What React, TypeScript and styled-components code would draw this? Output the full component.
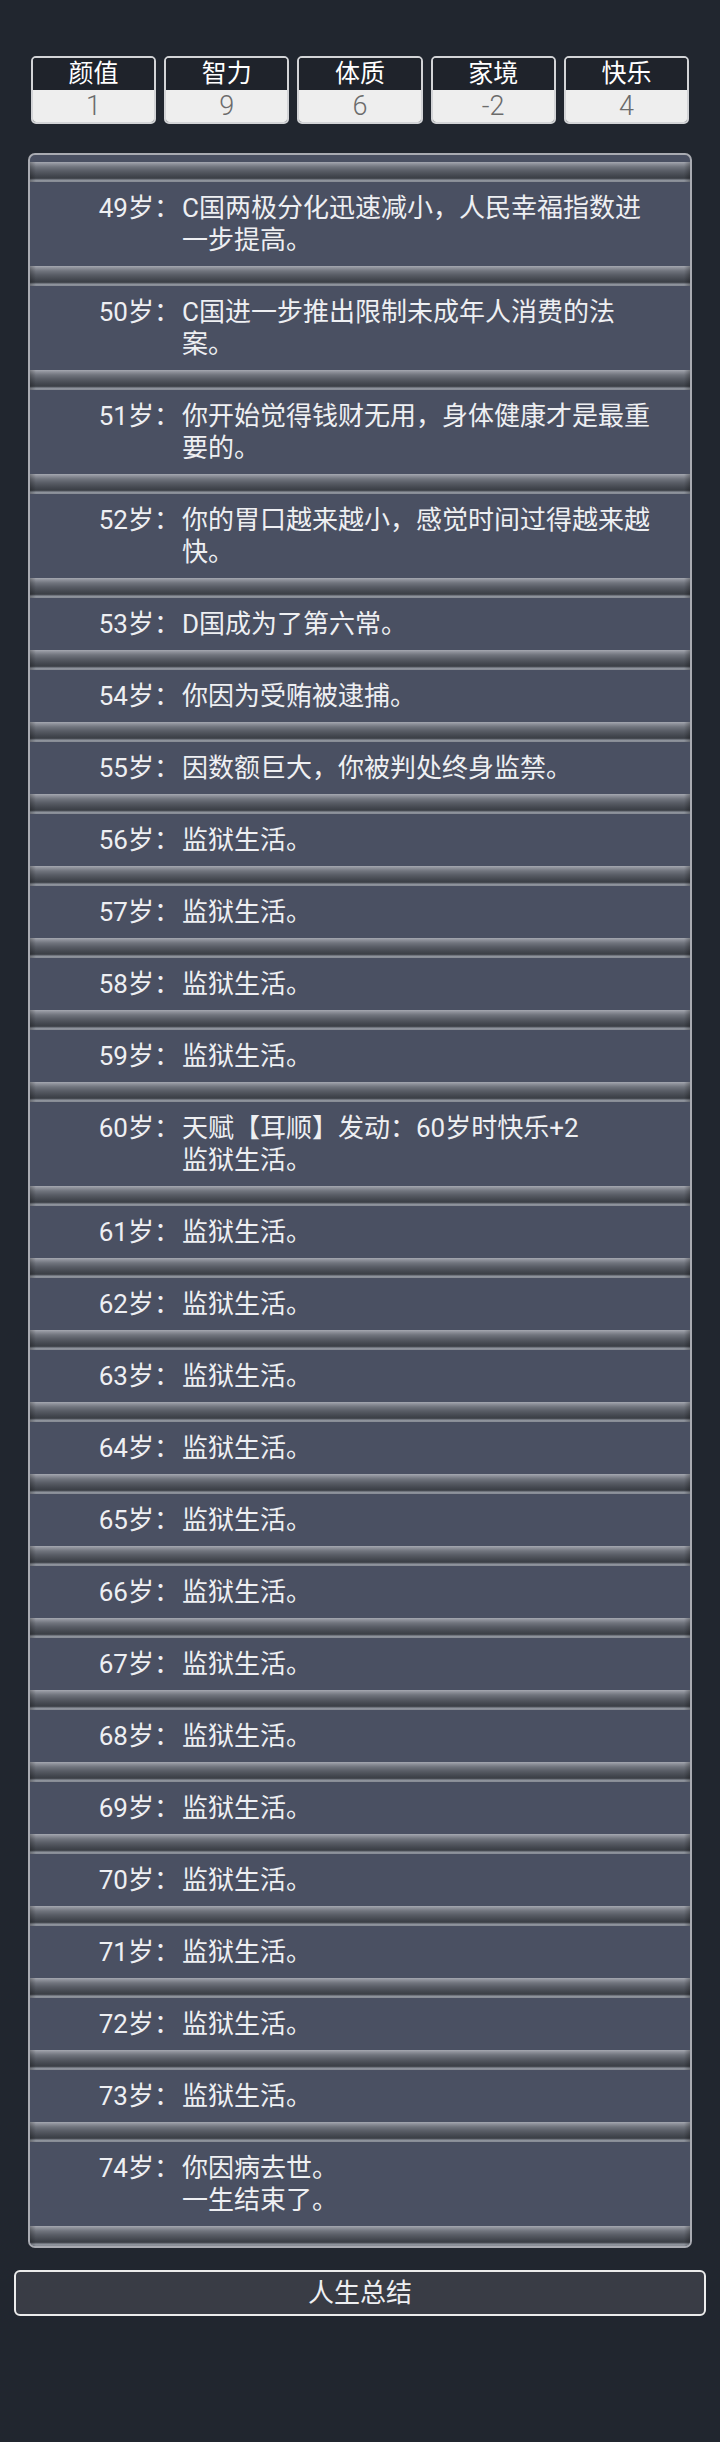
import React from 'react';
import styled, {createGlobalStyle} from 'styled-components';

const Colors = {
  Page: '#21262f',
  Panel: '#4a5062',
  Text: '#eeeff2',
  Frame: '#a9abb2',
  Button: '#393c45',
};

const Fonts = {
  Main: '"Roboto", "Noto Sans CJK SC", "Noto Sans", sans-serif',
};

const GlobalStyle = createGlobalStyle`
  html, body {
    margin: 0;
    padding: 0;
    background-color: ${Colors.Page};
  }
  body {
    font-family: ${Fonts.Main};
    color: ${Colors.Text};
  }
`;

const Page = styled.div`
  box-sizing: border-box;
  width: 720px;
  min-height: 2442px;
  padding-top: 56px;
  display: flex;
  flex-direction: column;
`;

const StatRow = styled.div`
  display: flex;
  flex-direction: row;
  gap: 8px;
  padding: 0 31px;
`;

const StatBox = styled.div`
  flex: 1;
  display: flex;
  flex-direction: column;
  border: 2px solid #d3d4d7;
  border-radius: 5px;
  overflow: hidden;
`;

const StatLabel = styled.div`
  height: 32px;
  line-height: 32px;
  text-align: center;
  font-size: 25px;
  color: #ffffff;
  background-color: #1f232b;
`;

const StatValue = styled.div`
  height: 32px;
  line-height: 32px;
  text-align: center;
  font-size: 27px;
  font-weight: 300;
  color: #6b6b6b;
  background-color: #eeeeee;
`;

const Trajectory = styled.div`
  margin: 29px 28px 0;
  border: 2px solid ${Colors.Frame};
  border-radius: 7px;
  overflow: hidden;
  background-color: ${Colors.Panel};
  padding-top: 7px;
  display: flex;
  flex-direction: column;
`;

// bevelled strip that closes each entry
const Groove = styled.div`
  height: 20px;
  background:
    linear-gradient(to right, rgba(0, 0, 0, 0.25) 0, rgba(0, 0, 0, 0) 6px,
      rgba(0, 0, 0, 0) calc(100% - 6px), rgba(0, 0, 0, 0.25) 100%),
    linear-gradient(to bottom,
      #a6a9b1 0, #8d9099 2px, #70747d 5px, #585c65 9px,
      #464a52 13px, #3b3f46 16px, #50545c 17px, #90959e 18px, #878b94 20px);
`;

const Entry = styled.div`
  display: grid;
  grid-template-columns: 150px 1fr;
  column-gap: 2px;
  padding: 10px 32px 10px 0;
  font-size: 26px;
  line-height: 32px;
`;

const Age = styled.span`
  text-align: right;
  white-space: nowrap;
`;

const Lines = styled.div`
  display: flex;
  flex-direction: column;
`;

const Summary = styled.button`
  margin: 22px 14px 0;
  height: 46px;
  border: 2px solid #ececec;
  border-radius: 6px;
  background-color: ${Colors.Button};
  color: ${Colors.Text};
  font-family: ${Fonts.Main};
  font-size: 26px;
  line-height: 40px;
  padding: 0;
  cursor: pointer;
`;

type Stat = { label: string; value: number };

type LifeEvent = { age: number; lines: string[] };

const stats: Stat[] = [
  {label: '颜值', value: 1},
  {label: '智力', value: 9},
  {label: '体质', value: 6},
  {label: '家境', value: -2},
  {label: '快乐', value: 4},
];

const prison = '监狱生活。';

const events: LifeEvent[] = [
  {age: 49, lines: ['C国两极分化迅速减小，人民幸福指数进一步提高。']},
  {age: 50, lines: ['C国进一步推出限制未成年人消费的法案。']},
  {age: 51, lines: ['你开始觉得钱财无用，身体健康才是最重要的。']},
  {age: 52, lines: ['你的胃口越来越小，感觉时间过得越来越快。']},
  {age: 53, lines: ['D国成为了第六常。']},
  {age: 54, lines: ['你因为受贿被逮捕。']},
  {age: 55, lines: ['因数额巨大，你被判处终身监禁。']},
  {age: 56, lines: [prison]},
  {age: 57, lines: [prison]},
  {age: 58, lines: [prison]},
  {age: 59, lines: [prison]},
  {age: 60, lines: ['天赋【耳顺】发动：60岁时快乐+2', prison]},
  ...[61, 62, 63, 64, 65, 66, 67, 68, 69, 70, 71, 72, 73].map(age => ({age, lines: [prison]})),
  {age: 74, lines: ['你因病去世。', '一生结束了。']},
];

const renderStats = () =>
  stats.map(stat => (
    <StatBox key={stat.label}>
      <StatLabel>{stat.label}</StatLabel>
      <StatValue>{stat.value}</StatValue>
    </StatBox>
  ));

const renderEvents = () =>
  events.map(event => (
    <React.Fragment key={event.age}>
      <Entry>
        <Age>{event.age}岁：</Age>
        <Lines>
          {event.lines.map((line, i) => <span key={i}>{line}</span>)}
        </Lines>
      </Entry>
      <Groove/>
    </React.Fragment>
  ));

const App = () => {
  return (
    <>
      <GlobalStyle/>
      <Page>
        <StatRow>{renderStats()}</StatRow>
        <Trajectory>
          <Groove/>
          {renderEvents()}
        </Trajectory>
        <Summary>人生总结</Summary>
      </Page>
    </>
  );
};

export default App;
